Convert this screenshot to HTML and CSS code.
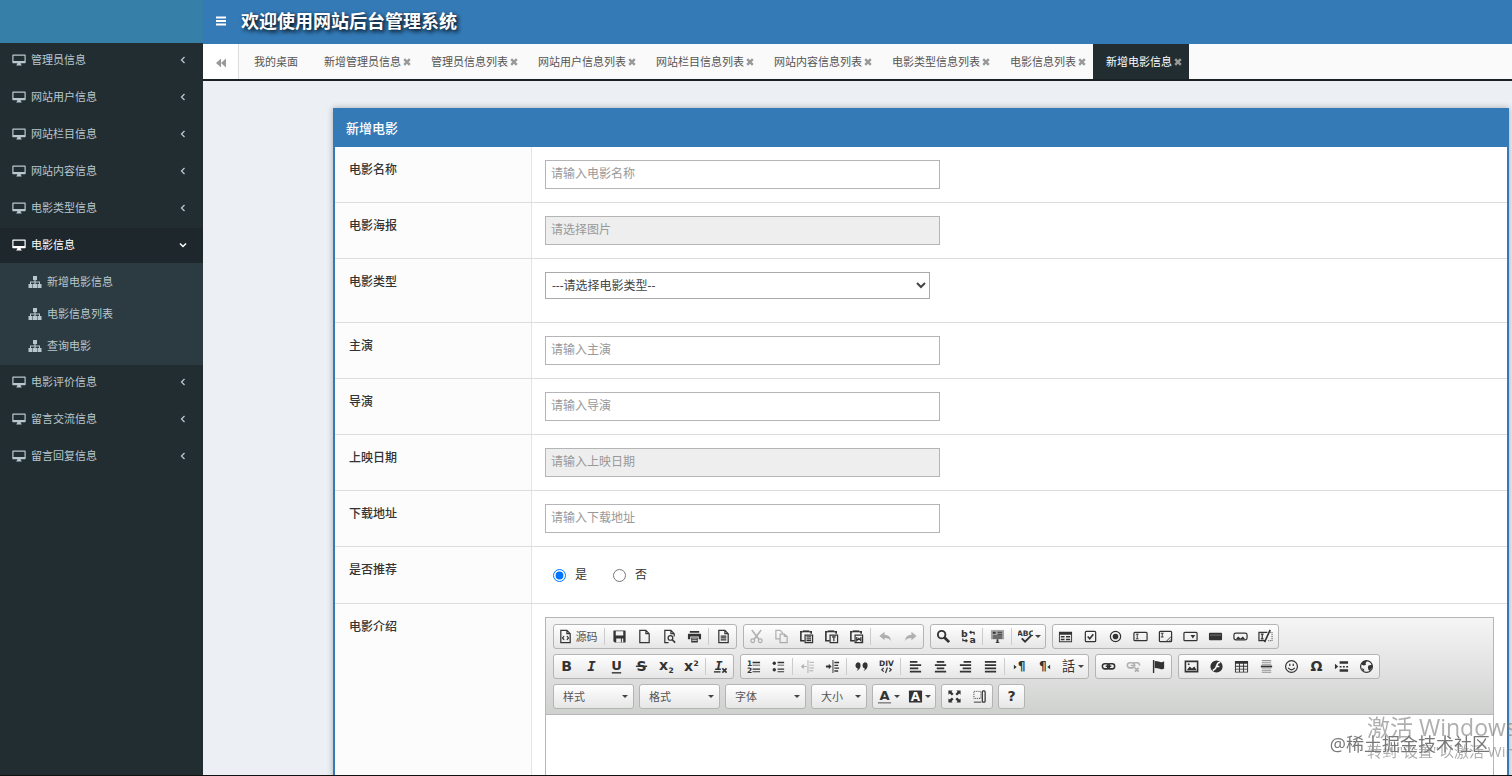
FILE: index.html
```
<!DOCTYPE html>
<html lang="zh-CN">
<head>
    <meta charset="UTF-8">
    <meta name="viewport" content="width=device-width, initial-scale=1.0">
    <title>网站后台管理系统</title>
    <link rel="stylesheet" href="styles.css">
</head>
<body>
    <!-- icon sprite -->
    <svg class="sprite" aria-hidden="true">
        <symbol id="i-desktop" viewBox="0 0 14 12"><path d="M1 .5h12q.7 0 .7.7v7.4q0 .7-.7.7H8.6l.5 1.4h.6v.8H4.3v-.8h.6l.5-1.400H1q-.7 0-.7-.7V1.200q0-.7.7-.7zM1.500 1.700v5.300h11V1.700z" fill-rule="evenodd"/></symbol>
        <symbol id="i-sitemap" viewBox="0 0 14 12"><path d="M5 0h4v4H7.600v1.600H12V8h1.500v4h-4V8H11V6.500H7.600V8H9v4H5V8h1.400V6.500H3V8h1.500v4h-4V8H2V5.600h4.400V4H5z"/></symbol>
        <symbol id="i-left" viewBox="0 0 10 10"><path d="M6.500 2 3.500 5l3 3" fill="none" stroke="currentColor" stroke-width="1.300"/></symbol>
        <symbol id="i-down" viewBox="0 0 10 10"><path d="M2 3.500l3 3 3-3" fill="none" stroke="currentColor" stroke-width="1.500"/></symbol>
        <symbol id="i-bars" viewBox="0 0 12 10"><path d="M1 .5h10v2H1zM1 4h10v2H1zM1 7.500h10v2H1z"/></symbol>
        <symbol id="i-backward" viewBox="0 0 12 10"><path d="M6 .5v9L1 5zM11 .5v9L6 5z"/></symbol>
        <symbol id="i-close" viewBox="0 0 8 8"><path d="m1.200 1.200 5.600 5.600M6.800 1.200 1.200 6.800" stroke="currentColor" stroke-width="2.400"/></symbol>

        <symbol id="e-source" viewBox="0 0 16 16"><path d="M3 1.500h6.500L13 5v9.500H3zM9.500 1.500V5H13M6.500 7.500 4.800 9.500l1.700 2M9.500 7.500l1.700 2-1.700 2" class="ln bold"/></symbol>
        <symbol id="e-save" viewBox="0 0 16 16"><path fill-rule="evenodd" d="M2 1.500h12l.5.5v12l-.5.5H3L1.500 13V2zM4 2.500V7h8V2.500zM4.500 10v4h5v-4zM10.500 10v4H12v-4z"/></symbol>
        <symbol id="e-new" viewBox="0 0 16 16"><path d="M3 1.500h6.500L13 5v9.500H3zM9.500 1.500V5H13" class="ln bold"/></symbol>
        <symbol id="e-preview" viewBox="0 0 16 16"><path d="M7 14.500H3v-13h6.500L13 5v3M9.500 1.500V5H13" class="ln bold"/><circle cx="9" cy="9.500" r="2.500" class="ln bold"/><path d="m11 11.500 3 3" class="ln2"/></symbol>
        <symbol id="e-print" viewBox="0 0 16 16"><path fill-rule="evenodd" d="M3 2h10v2H3zM1.500 5h13l.5.5V11h-2.500V8h-9v3H1V5.500zM4.500 9h7v5.500h-7zM5.500 10v.8h5V10zM5.500 12v.8h5V12z"/></symbol>
        <symbol id="e-template" viewBox="0 0 16 16"><path d="M3 1.500h6.500L13 5v9.500H3zM9.500 1.500V5H13M5 7.500h6M5 9.500h6M5 11.500h6" class="ln bold"/></symbol>
        <symbol id="e-cut" viewBox="0 0 16 16"><path d="m3 1 7.500 10M13 1 5.500 11" class="ln2"/><circle cx="4" cy="12.500" r="2" class="ln bold"/><circle cx="12" cy="12.500" r="2" class="ln bold"/></symbol>
        <symbol id="e-copy" viewBox="0 0 16 16"><path d="M6 10.500H2v-9h4.500L9 4v1M6.500 5.500H11L14 8v6.500H6.500zM11 5.500V8h3" class="ln bold"/></symbol>
        <symbol id="e-paste" viewBox="0 0 16 16"><path d="M6 12.500H2V3h2M11 3h2v2" class="ln2"/><path d="M4 1.500h7v2H4z"/><path d="M6.500 6.500h8v8h-8zM8 8.500h5M8 10.500h5M8 12.500h5" class="ln bold"/></symbol>
        <symbol id="e-pastetext" viewBox="0 0 16 16"><path d="M6 12.500H2V3h2M11 3h2v2" class="ln2"/><path d="M4 1.500h7v2H4z"/><path d="M6.500 6.500h8v8h-8zM8.500 8.500h4M10.500 8.500v4.500" class="ln bold"/></symbol>
        <symbol id="e-pasteword" viewBox="0 0 16 16"><path d="M6 12.500H2V3h2M11 3h2v2" class="ln2"/><path d="M4 1.500h7v2H4z"/><path d="M6.500 6.500h8v8h-8zM8.300 8.500v4l2.200-2.500 2.200 2.500v-4" class="ln bold"/></symbol>
        <symbol id="e-undo" viewBox="0 0 16 16"><path d="M1.500 7.500 7 3v3q6.500 0 7 7-2-3.500-7-3.500V12z"/></symbol>
        <symbol id="e-redo" viewBox="0 0 16 16"><path d="M14.500 7.500 9 3v3q-6.500 0-7 7 2-3.500 7-3.500V12z"/></symbol>
        <symbol id="e-find" viewBox="0 0 16 16"><circle cx="6" cy="6" r="4" fill="none" stroke="currentColor" stroke-width="2"/><path d="m9 9 5 5" stroke="currentColor" stroke-width="3"/></symbol>
        <symbol id="e-selectall" viewBox="0 0 16 16"><path opacity=".4" d="M1 1h14v10H1z"/><path d="M3 3h3v2H3zM8 3h5v1H8zM8 5h5v1H8zM3 7h10v1H3zM3 9h10v1H3zM7 11h2v4H7zM6 14h4v1H6z"/></symbol>
        <symbol id="e-form" viewBox="0 0 16 16"><path fill-rule="evenodd" d="M1 3h14v11H1zM2 6v7h12V6zM3 7.500h4V9H3zM8.500 7.500H13V9H8.500zM3 10.500h4V12H3zM8.500 10.500H13V12H8.500z"/></symbol>
        <symbol id="e-checkbox" viewBox="0 0 16 16"><rect x="2.500" y="2.500" width="11" height="11" rx="1" class="ln bold"/><path d="m5 8 2.200 2.500L11 5.500" class="ln2"/></symbol>
        <symbol id="e-radio" viewBox="0 0 16 16"><circle cx="8" cy="8" r="5.500" class="ln bold"/><circle cx="8" cy="8" r="3"/></symbol>
        <symbol id="e-textfield" viewBox="0 0 16 16"><rect x="1" y="3.500" width="14" height="9" rx="1" class="ln bold"/><path d="M3 5.500h3M4.500 5.500v5M3 10.500h3" class="ln"/></symbol>
        <symbol id="e-textarea" viewBox="0 0 16 16"><rect x="1.500" y="2.500" width="13" height="11" rx="1" class="ln bold"/><path d="M3 4.500h3M4.500 4.500v4M3 8.500h3M9 13l5-5M12 13l2-2" class="ln"/></symbol>
        <symbol id="e-selectfield" viewBox="0 0 16 16"><rect x="1" y="3.500" width="14" height="9" rx="1" class="ln bold"/><path d="M8 6.500h5L10.500 10z"/></symbol>
        <symbol id="e-button" viewBox="0 0 16 16"><rect x="1" y="4" width="14" height="8" rx="1"/><path d="M2 6.500h12" stroke="#777"/></symbol>
        <symbol id="e-imagebutton" viewBox="0 0 16 16"><rect x="1" y="4.500" width="14" height="7" rx="2" class="ln bold"/><path d="m3 11 2.500-3L8 10l2.500-2 2.500 3z"/></symbol>
        <symbol id="e-hidden" viewBox="0 0 16 16"><path d="M8 12.500H1v-9h9M3 5.500h3M4.500 5.500v5M3 10.500h3" class="ln bold"/><path d="M13 3.500h2v9h-5" class="ln" stroke-dasharray="1 1"/><path d="m13 1-6 13" class="ln2"/></symbol>

        <symbol id="e-ul" viewBox="0 0 16 16"><circle cx="3.500" cy="4.500" r="1.800"/><circle cx="3.500" cy="11.500" r="1.800"/><path d="M7 3h7v1.500H7zM7 6h7v1H7zM7 10h7v1.500H7zM7 13h7v1H7z"/></symbol>
        <symbol id="e-outdent" viewBox="0 0 16 16"><path d="M10 3h5v1h-5zM10 6h5v1h-5zM10 9h5v1h-5zM10 12h4v1h-4zM8 1h1v14H8zM1 8l3-3v6z"/><path d="M3 7.500h4v1H3z"/></symbol>
        <symbol id="e-indent" viewBox="0 0 16 16"><path d="M8 1h1v14H8zM10 3h5v1.500h-5zM10 6h4v1.500h-4zM10 9h5v1.500h-5zM10 12h4v1.500h-4zM1 7h3V5l3 3-3 3V9H1z"/></symbol>
        <symbol id="e-quote" viewBox="0 0 16 16"><path d="M4 3.500q3 0 3 3.500 0 4-4.500 6 1.500-1.500 1.500-3-2.500-.5-2.500-3T4 3.500zM11.500 3.500q3 0 3 3.500 0 4-4.500 6 1.500-1.500 1.500-3-2.500-.5-2.500-3t2.500-3.500z"/></symbol>
        <symbol id="e-aleft" viewBox="0 0 16 16"><path d="M2 2h8v2H2zM2 5.500h12v2H2zM2 9h9v2H2zM2 12.500h12v2H2z"/></symbol>
        <symbol id="e-acenter" viewBox="0 0 16 16"><path d="M4 2h8v2H4zM2 5.500h12v2H2zM4 9h8v2H4zM2 12.500h12v2H2z"/></symbol>
        <symbol id="e-aright" viewBox="0 0 16 16"><path d="M6 2h8v2H6zM2 5.500h12v2H2zM5 9h9v2H5zM2 12.500h12v2H2z"/></symbol>
        <symbol id="e-ajustify" viewBox="0 0 16 16"><path d="M2 2h12v2H2zM2 5.500h12v2H2zM2 9h12v2H2zM2 12.500h12v2H2z"/></symbol>
        <symbol id="e-link" viewBox="0 0 16 16"><rect x="1.500" y="5" width="7.500" height="5.500" rx="2.500" class="ln2"/><rect x="7" y="5" width="7.500" height="5.500" rx="2.500" class="ln2"/><path d="M5 7h6v1.500H5z"/></symbol>
        <symbol id="e-unlink" viewBox="0 0 16 16"><rect x="1.500" y="4" width="7.500" height="5.500" rx="2.500" class="ln2"/><path d="M8 4h4q2.500 0 2.500 3M5 7h5M9.500 9.500l4 4M13.500 9.500l-4 4" class="ln2"/></symbol>
        <symbol id="e-anchor" viewBox="0 0 16 16"><path d="M2 1h1.500v14H2zM4 2q3 0 5 1t5-.5V10q-3 1.500-5 .5T4 9.500z"/></symbol>
        <symbol id="e-image" viewBox="0 0 16 16"><path d="M1.500 2.500h13v11h-13z" class="ln2"/><path d="m3 12 3-4 2.500 2L11 8l2.500 4z"/><circle cx="5" cy="5.500" r="1"/></symbol>
        <symbol id="e-flash" viewBox="0 0 16 16"><circle cx="8" cy="8" r="6.500"/><path d="M12 3.500q-3 0-3.700 3.500T4 12.500M7 8h4" fill="none" stroke="#fff" stroke-width="1.600"/></symbol>
        <symbol id="e-table" viewBox="0 0 16 16"><path fill-rule="evenodd" d="M1 2h14v12.500H1zM2 5v2.300h3.300V5zM6.300 5v2.300h3.400V5zM10.700 5v2.300H14V5zM2 8.300v2h3.300v-2zM6.300 8.300v2h3.400v-2zM10.700 8.300v2H14v-2zM2 11.300v2.200h3.300v-2.200zM6.300 11.300v2.200h3.400v-2.200zM10.700 11.300v2.200H14v-2.200z"/></symbol>
        <symbol id="e-hr" viewBox="0 0 16 16"><path opacity=".5" d="M3 1h10v1H3zM3 3h10v1H3zM3 5h10v1H3zM3 10h10v1H3zM3 12h10v1H3zM3 14h10v1H3z"/><path d="M2 7h12v2H2z"/></symbol>
        <symbol id="e-smiley" viewBox="0 0 16 16"><circle cx="8" cy="8" r="6.300" class="ln bold"/><path d="M5.500 5h1.300v2.500H5.500zM9.200 5h1.300v2.500H9.200z"/><path d="M4.500 9.500q3.500 4 7 0" class="ln bold"/></symbol>
        <symbol id="e-pagebreak" viewBox="0 0 16 16"><path d="m1 5 3.500 3L1 11zM6 2.500h9v2.500H6zM6 11h9v2.500H6zM6 7.500h2V9H6zM9.500 7.500h2V9h-2zM13 7.500h2V9h-2z"/></symbol>
        <symbol id="e-iframe" viewBox="0 0 16 16"><circle cx="8" cy="8" r="6.300" class="ln bold"/><path d="M3 4q3-3 5.500-2L7 4.500l.5 1.500L5 7 3 6zM10 7l4-1v3l-2.500 3.500-1.500-1L9.500 9zM3 9.500l2.500 1.500v2q-2-1-2.500-3.500z"/></symbol>
        <symbol id="e-max" viewBox="0 0 16 16"><path d="M1.500 1.500H6L4.800 3 7 5.200 5.200 7 3 4.800 1.500 6zM14.500 1.500V6L13 4.800 10.800 7 9 5.200 11.200 3 10 1.500zM1.500 14.500V10L3 11.200 5.200 9 7 10.800 4.800 13 6 14.500zM14.500 14.500H10l1.200-1.500L9 10.800 10.800 9l2.200 2.200 1.500-1.200z"/></symbol>
        <symbol id="e-blocks" viewBox="0 0 16 16"><path d="M2 2.500h7.500V10H2z" class="ln" stroke-dasharray="1 1"/><path d="M2 14h8" class="ln"/><rect x="11" y="2" width="3" height="12" rx="1" class="ln bold"/></symbol>
    </svg>

    <div class="wrapper">
        <aside class="sidebar">
            <div class="logo"></div>
            <ul class="menu">
                <li><a href="#"><svg class="ico"><use href="#i-desktop"/></svg>管理员信息<svg class="arrow"><use href="#i-left"/></svg></a></li>
                <li><a href="#"><svg class="ico"><use href="#i-desktop"/></svg>网站用户信息<svg class="arrow"><use href="#i-left"/></svg></a></li>
                <li><a href="#"><svg class="ico"><use href="#i-desktop"/></svg>网站栏目信息<svg class="arrow"><use href="#i-left"/></svg></a></li>
                <li><a href="#"><svg class="ico"><use href="#i-desktop"/></svg>网站内容信息<svg class="arrow"><use href="#i-left"/></svg></a></li>
                <li><a href="#"><svg class="ico"><use href="#i-desktop"/></svg>电影类型信息<svg class="arrow"><use href="#i-left"/></svg></a></li>
                <li class="active">
                    <a href="#"><svg class="ico"><use href="#i-desktop"/></svg>电影信息<svg class="arrow"><use href="#i-down"/></svg></a>
                    <ul class="submenu">
                        <li><a href="#"><svg class="ico"><use href="#i-sitemap"/></svg>新增电影信息</a></li>
                        <li><a href="#"><svg class="ico"><use href="#i-sitemap"/></svg>电影信息列表</a></li>
                        <li><a href="#"><svg class="ico"><use href="#i-sitemap"/></svg>查询电影</a></li>
                    </ul>
                </li>
                <li><a href="#"><svg class="ico"><use href="#i-desktop"/></svg>电影评价信息<svg class="arrow"><use href="#i-left"/></svg></a></li>
                <li><a href="#"><svg class="ico"><use href="#i-desktop"/></svg>留言交流信息<svg class="arrow"><use href="#i-left"/></svg></a></li>
                <li><a href="#"><svg class="ico"><use href="#i-desktop"/></svg>留言回复信息<svg class="arrow"><use href="#i-left"/></svg></a></li>
            </ul>
        </aside>

        <div class="main">
            <header class="header">
                <button type="button" class="toggle" aria-label="菜单"><svg><use href="#i-bars"/></svg></button>
                <h1>欢迎使用网站后台管理系统</h1>
            </header>

            <nav class="tabs">
                <button type="button" class="tab-scroll" aria-label="向左"><svg><use href="#i-backward"/></svg></button>
                <div class="tab-list">
                    <a href="#" class="home">我的桌面</a>
                    <a href="#">新增管理员信息<svg><use href="#i-close"/></svg></a>
                    <a href="#">管理员信息列表<svg><use href="#i-close"/></svg></a>
                    <a href="#">网站用户信息列表<svg><use href="#i-close"/></svg></a>
                    <a href="#">网站栏目信息列表<svg><use href="#i-close"/></svg></a>
                    <a href="#">网站内容信息列表<svg><use href="#i-close"/></svg></a>
                    <a href="#">电影类型信息列表<svg><use href="#i-close"/></svg></a>
                    <a href="#">电影信息列表<svg><use href="#i-close"/></svg></a>
                    <a href="#" class="active">新增电影信息<svg><use href="#i-close"/></svg></a>
                </div>
            </nav>

            <div class="content">
                <form class="panel">
                    <h2>新增电影</h2>
                    <div class="row">
                        <label class="name" for="title">电影名称</label>
                        <div class="field"><input type="text" id="title" placeholder="请输入电影名称"></div>
                    </div>
                    <div class="row">
                        <label class="name" for="poster">电影海报</label>
                        <div class="field"><input type="text" id="poster" placeholder="请选择图片" readonly></div>
                    </div>
                    <div class="row">
                        <label class="name" for="type">电影类型</label>
                        <div class="field">
                            <select id="type">
                                <option>---请选择电影类型--</option>
                            </select>
                        </div>
                    </div>
                    <div class="row">
                        <label class="name" for="actor">主演</label>
                        <div class="field"><input type="text" id="actor" placeholder="请输入主演"></div>
                    </div>
                    <div class="row">
                        <label class="name" for="director">导演</label>
                        <div class="field"><input type="text" id="director" placeholder="请输入导演"></div>
                    </div>
                    <div class="row">
                        <label class="name" for="date">上映日期</label>
                        <div class="field"><input type="text" id="date" placeholder="请输入上映日期" readonly></div>
                    </div>
                    <div class="row">
                        <label class="name" for="url">下载地址</label>
                        <div class="field"><input type="text" id="url" placeholder="请输入下载地址"></div>
                    </div>
                    <div class="row">
                        <span class="name">是否推荐</span>
                        <div class="field radios">
                            <label><input type="radio" name="recommend" checked>是</label>
                            <label><input type="radio" name="recommend">否</label>
                        </div>
                    </div>
                    <div class="row">
                        <label class="name" for="intro">电影介绍</label>
                        <div class="field">
                            <div class="editor">
                                <div class="toolbar">
                                    <div class="tool-row">
                                        <div class="group">
                                            <button type="button" class="source"><svg><use href="#e-source"/></svg>源码</button>
                                            <i></i>
                                            <button type="button"><svg><use href="#e-save"/></svg></button>
                                            <button type="button"><svg><use href="#e-new"/></svg></button>
                                            <button type="button"><svg><use href="#e-preview"/></svg></button>
                                            <button type="button"><svg><use href="#e-print"/></svg></button>
                                            <i></i>
                                            <button type="button"><svg><use href="#e-template"/></svg></button>
                                        </div>
                                        <div class="group">
                                            <button type="button" disabled><svg><use href="#e-cut"/></svg></button>
                                            <button type="button" disabled><svg><use href="#e-copy"/></svg></button>
                                            <button type="button"><svg><use href="#e-paste"/></svg></button>
                                            <button type="button"><svg><use href="#e-pastetext"/></svg></button>
                                            <button type="button"><svg><use href="#e-pasteword"/></svg></button>
                                            <i></i>
                                            <button type="button" disabled><svg><use href="#e-undo"/></svg></button>
                                            <button type="button" disabled><svg><use href="#e-redo"/></svg></button>
                                        </div>
                                        <div class="group">
                                            <button type="button"><svg><use href="#e-find"/></svg></button>
                                            <button type="button"><svg viewBox="0 0 16 16"><text x="0" y="8" class="t10">b</text><text x="9" y="15" class="t10">a</text><path d="M14 6V3.500H9.500M11 2 9.500 3.500 11 5M2 10v2.500h4.500M5 11l1.500 1.500L5 14" class="ln bold"/></svg></button>
                                            <i></i>
                                            <button type="button"><svg><use href="#e-selectall"/></svg></button>
                                            <i></i>
                                            <button type="button" class="drop"><svg viewBox="0 0 16 16"><text x="8" y="7" text-anchor="middle" class="t8">ABC</text><path d="m4 10 3.500 3.500L14 7" fill="none" stroke="currentColor" stroke-width="2"/></svg></button>
                                        </div>
                                        <div class="group">
                                            <button type="button"><svg><use href="#e-form"/></svg></button>
                                            <button type="button"><svg><use href="#e-checkbox"/></svg></button>
                                            <button type="button"><svg><use href="#e-radio"/></svg></button>
                                            <button type="button"><svg><use href="#e-textfield"/></svg></button>
                                            <button type="button"><svg><use href="#e-textarea"/></svg></button>
                                            <button type="button"><svg><use href="#e-selectfield"/></svg></button>
                                            <button type="button"><svg><use href="#e-button"/></svg></button>
                                            <button type="button"><svg><use href="#e-imagebutton"/></svg></button>
                                            <button type="button"><svg><use href="#e-hidden"/></svg></button>
                                        </div>
                                    </div>
                                    <div class="tool-row">
                                        <div class="group">
                                            <button type="button"><svg viewBox="0 0 16 16"><text x="8" y="13" text-anchor="middle" class="t15">B</text></svg></button>
                                            <button type="button"><svg viewBox="0 0 16 16"><text x="8" y="13" text-anchor="middle" class="t15 mono it">I</text></svg></button>
                                            <button type="button"><svg viewBox="0 0 16 16"><text x="8" y="12" text-anchor="middle" class="t14">U</text><path d="M3 14h10v1.500H3z"/></svg></button>
                                            <button type="button"><svg viewBox="0 0 16 16"><text x="8" y="13" text-anchor="middle" class="t15">S</text><path d="M2 7h12v1.500H2z"/></svg></button>
                                            <button type="button"><svg viewBox="0 0 16 16"><text x="0" y="12" class="t15">x</text><text x="10" y="15" class="t8">2</text></svg></button>
                                            <button type="button"><svg viewBox="0 0 16 16"><text x="0" y="13" class="t15">x</text><text x="10" y="7" class="t8">2</text></svg></button>
                                            <i></i>
                                            <button type="button"><svg viewBox="0 0 16 16"><text x="6" y="12" text-anchor="middle" class="t14 mono it">I</text><path d="M1 13h7v1.500H1z"/><path d="m10 10 4.500 4.500M14.500 10 10 14.500" class="ln2"/></svg></button>
                                        </div>
                                        <div class="group">
                                            <button type="button"><svg viewBox="0 0 16 16"><text x="1" y="7" class="t8">1</text><text x="1" y="15" class="t8">2</text><path d="M7 3h8v1.500H7zM7 6h8v1H7zM7 10h8v1.500H7zM7 13h8v1H7z"/></svg></button>
                                            <button type="button"><svg><use href="#e-ul"/></svg></button>
                                            <i></i>
                                            <button type="button" disabled><svg><use href="#e-outdent"/></svg></button>
                                            <button type="button"><svg><use href="#e-indent"/></svg></button>
                                            <i></i>
                                            <button type="button"><svg><use href="#e-quote"/></svg></button>
                                            <button type="button"><svg viewBox="0 0 16 16"><text x="8" y="7" text-anchor="middle" class="t8">DIV</text><path d="m5 9.500-2 2 2 2M11 9.500l2 2-2 2M9 9l-2 6" class="ln bold"/></svg></button>
                                            <i></i>
                                            <button type="button"><svg><use href="#e-aleft"/></svg></button>
                                            <button type="button"><svg><use href="#e-acenter"/></svg></button>
                                            <button type="button"><svg><use href="#e-aright"/></svg></button>
                                            <button type="button"><svg><use href="#e-ajustify"/></svg></button>
                                            <i></i>
                                            <button type="button"><svg viewBox="0 0 16 16"><path d="m2 6 3 2.500L2 11z"/><text x="6" y="12" class="t13">¶</text></svg></button>
                                            <button type="button"><svg viewBox="0 0 16 16"><path d="m14 6-3 2.500 3 2.500z"/><text x="2" y="12" class="t13">¶</text></svg></button>
                                            <button type="button" class="drop"><svg viewBox="0 0 16 16"><text x="8" y="13" text-anchor="middle" class="cjk">話</text></svg></button>
                                        </div>
                                        <div class="group">
                                            <button type="button"><svg><use href="#e-link"/></svg></button>
                                            <button type="button" disabled><svg><use href="#e-unlink"/></svg></button>
                                            <button type="button"><svg><use href="#e-anchor"/></svg></button>
                                        </div>
                                        <div class="group">
                                            <button type="button"><svg><use href="#e-image"/></svg></button>
                                            <button type="button"><svg><use href="#e-flash"/></svg></button>
                                            <button type="button"><svg><use href="#e-table"/></svg></button>
                                            <button type="button"><svg><use href="#e-hr"/></svg></button>
                                            <button type="button"><svg><use href="#e-smiley"/></svg></button>
                                            <button type="button"><svg viewBox="0 0 16 16"><text x="8" y="13" text-anchor="middle" class="t15">Ω</text></svg></button>
                                            <button type="button"><svg><use href="#e-pagebreak"/></svg></button>
                                            <button type="button"><svg><use href="#e-iframe"/></svg></button>
                                        </div>
                                    </div>
                                    <div class="tool-row combos">
                                        <button type="button" class="combo">样式</button>
                                        <button type="button" class="combo">格式</button>
                                        <button type="button" class="combo">字体</button>
                                        <button type="button" class="combo small">大小</button>
                                        <div class="group">
                                            <button type="button" class="drop"><svg viewBox="0 0 16 16"><text x="8" y="12" text-anchor="middle" class="t14">A</text><path opacity=".6" d="M1 14h14v1.500H1z"/></svg></button>
                                            <button type="button" class="drop"><svg viewBox="0 0 16 16"><rect x="1" y="1.500" width="14" height="13" rx="1"/><text x="8" y="13" text-anchor="middle" class="t13 light">A</text></svg></button>
                                        </div>
                                        <div class="group">
                                            <button type="button"><svg><use href="#e-max"/></svg></button>
                                            <button type="button"><svg><use href="#e-blocks"/></svg></button>
                                        </div>
                                        <div class="group">
                                            <button type="button"><svg viewBox="0 0 16 16"><text x="8" y="13" text-anchor="middle" class="t15">?</text></svg></button>
                                        </div>
                                    </div>
                                </div>
                                <textarea id="intro"></textarea>
                            </div>
                        </div>
                    </div>
                </form>
            </div>
        </div>
    </div>

    <div class="activate">
        <p class="big">激活 Windows</p>
        <p>转到"设置"以激活 Windows</p>
    </div>
    <div class="watermark">@稀土掘金技术社区</div>
</body>
</html>
```
FILE: styles.css
```
* {
    margin: 0;
    padding: 0;
    box-sizing: border-box;
}

body {
    font-family: "Open Sans", "Noto Sans CJK SC", sans-serif;
    font-size: 12px;
    line-height: 18px;
    color: #333;
    background: #ecf0f5;
    overflow: hidden;
}

button,
input,
select,
textarea {
    font: inherit;
    color: inherit;
}

button {
    border: none;
    background: none;
    cursor: pointer;
}

a {
    color: inherit;
    text-decoration: none;
}

ul {
    list-style: none;
}

svg {
    fill: currentColor;
    flex: none;
}

.sprite {
    position: absolute;
    width: 0;
    height: 0;
}

.wrapper {
    display: flex;
    height: 100vh;
    border-bottom: 1px solid #111;
}

/* sidebar */
.sidebar {
    width: 203px;
    flex: none;
    background: #222d32;
    color: #b8c7ce;
    font-size: 11px;
}

.logo {
    height: 43px;
    background: #367fa9;
}

.menu a {
    display: flex;
    align-items: center;
    height: 37px;
    padding: 0 15px 3px 12px;
}

.menu .ico {
    width: 14px;
    height: 12px;
    margin-right: 5px;
}

.menu .arrow {
    width: 10px;
    height: 10px;
    margin-left: auto;
}

.menu .active > a {
    height: 35px;
    padding-bottom: 2px;
    background: #1e282c;
    color: #fff;
}

.menu .submenu {
    padding: 3px 0;
    background: #2c3b41;
}

.menu .submenu a {
    height: 32px;
    padding: 0 0 0 28px;
}

/* header */
.main {
    flex: 1;
    min-width: 0;
    display: flex;
    flex-direction: column;
}

.header {
    display: flex;
    align-items: center;
    flex: none;
    height: 44px;
    padding: 0 0 2px 12px;
    background: #337ab7;
    color: #fff;
}

.toggle {
    width: 12px;
    height: 14px;
    margin-right: 14px;
}

.toggle svg {
    display: block;
    width: 12px;
    height: 10px;
}

.header h1 {
    font-size: 18px;
    line-height: 24px;
    font-weight: 700;
    text-shadow: 2px 2px 4px #000;
}

/* tabs */
.tabs {
    display: flex;
    flex: none;
    height: 37px;
    background: #fafafa;
    border-bottom: 2px solid #1a2226;
    color: #555;
    font-size: 11px;
}

.tab-scroll {
    width: 36px;
    border-right: 1px solid #ddd;
    background: #fff;
    color: #999;
}

.tab-scroll svg {
    width: 12px;
    height: 10px;
    vertical-align: middle;
}

.tab-list {
    display: flex;
    padding-left: 2px;
    white-space: nowrap;
}

.tab-list a {
    display: flex;
    align-items: center;
    gap: 2px;
    padding: 0 7px 0 13px;
}

.tab-list .home {
    padding-right: 13px;
}

.tab-list svg {
    width: 8px;
    height: 8px;
    color: #999;
}

.tab-list .active {
    background: #222d32;
    color: #fff;
}

/* form panel */
.content {
    flex: 1;
    min-height: 0;
    padding: 27px 3px 0 130px;
    overflow-y: auto;
    scrollbar-width: none;
    background: #ecf0f5;
}

.panel {
    border: 2px solid #337ab7;
    background: #fff;
    box-shadow: 0 0 6px rgba(0, 0, 0, 0.3);
}

.panel h2 {
    height: 37px;
    padding-left: 11px;
    background: #337ab7;
    color: #fff;
    font-size: 13px;
    line-height: 36px;
    font-weight: 500;
}

.row {
    display: flex;
    border-bottom: 1px solid #ddd;
}

.row .name {
    width: 197px;
    flex: none;
    padding: 14px 14px;
    border-right: 1px solid #e5e5e5;
    background: #fcfcfc;
    font-weight: 500;
}

.field {
    flex: 1;
    min-width: 0;
    padding: 13px 13px;
}

.field input[type="text"] {
    display: block;
    width: 395px;
    max-width: 100%;
    height: 29px;
    padding: 0 5px 2px;
    border: 1px solid #b5b5b5;
    background: #fff;
}

.field input[readonly] {
    background: #eee;
}

.field input::placeholder {
    color: #999;
}

.field select {
    display: block;
    width: 385px;
    max-width: 100%;
    height: 27px;
    margin-bottom: 10px;
    padding: 0 2px;
    border: 1px solid #aaa;
    border-radius: 0;
    background: #fff;
    color: #444;
}

.radios {
    display: flex;
    gap: 26px;
    height: 56px;
    padding-left: 21px;
}

.radios label {
    display: flex;
    align-items: center;
    gap: 9px;
}

.radios input {
    width: 13px;
    height: 13px;
}

/* rich text editor */
.editor {
    border: 1px solid #b6b6b6;
}

.toolbar {
    display: flex;
    flex-direction: column;
    gap: 5px;
    padding: 6px 7px 5px;
    border-bottom: 1px solid #b6b6b6;
    background: linear-gradient(#f5f5f5, #cfd1cf);
}

.tool-row {
    display: flex;
    gap: 6px;
}

.combos {
    gap: 5px;
}

.group,
.combo {
    display: flex;
    align-items: center;
    height: 25px;
    border: 1px solid #b4b4b4;
    border-radius: 3px;
    background: linear-gradient(#fff, #e6e6e6);
    color: #555;
    font-size: 11px;
}

.group button {
    display: flex;
    align-items: center;
    justify-content: center;
    width: 25px;
    height: 23px;
    color: #333;
}

.group button:disabled {
    opacity: 0.35;
}

.group svg {
    width: 15px;
    height: 15px;
}

.group i {
    width: 1px;
    height: 17px;
    margin: 0 2px 0 1px;
    background: #ccc;
}

.group .source {
    width: 49px;
    gap: 3px;
    padding-right: 2px;
    color: #555;
}

.source svg {
    color: #333;
}

.group .drop {
    width: 31px;
    gap: 2px;
}

.drop::after,
.combo::after {
    content: "";
    border: 3px solid transparent;
    border-top-color: #444;
    border-bottom: none;
}

.combo {
    width: 81px;
    justify-content: space-between;
    padding: 0 5px 0 9px;
}

.combo.small {
    width: 56px;
}

.editor textarea {
    display: block;
    width: 100%;
    height: 200px;
    padding: 10px;
    border: none;
    outline: none;
    resize: none;
}

/* toolbar icon strokes */
.ln,
.ln2 {
    fill: none;
    stroke: currentColor;
    stroke-width: 1;
}

.ln.bold {
    stroke-width: 1.3;
}

.ln2 {
    stroke-width: 1.7;
}

/* toolbar icon lettering */
.group text {
    font-family: "DejaVu Sans", sans-serif;
    font-weight: 700;
}

.t8 { font-size: 8px; }
.t10 { font-size: 10px; }
.t13 { font-size: 13px; }
.t14 { font-size: 14px; }
.t15 { font-size: 15px; }

.group .mono {
    font-family: "DejaVu Sans Mono", monospace;
}

.it {
    font-style: italic;
}

.light {
    fill: #fff;
}

.group .cjk {
    font-family: "Noto Sans CJK TC", sans-serif;
    font-size: 14px;
    font-weight: 400;
}

/* overlays */
.activate {
    position: fixed;
    left: calc(100% - 145px);
    bottom: 15px;
    color: rgba(120, 120, 120, 0.6);
    font-size: 15px;
    line-height: 20px;
    white-space: nowrap;
    pointer-events: none;
}

.activate .big {
    font-size: 23px;
    line-height: 28px;
}

.watermark {
    position: fixed;
    right: 22px;
    bottom: 20px;
    color: #777;
    font-size: 18px;
    line-height: 24px;
    text-shadow: 0 0 1px #fff;
    pointer-events: none;
}
```
